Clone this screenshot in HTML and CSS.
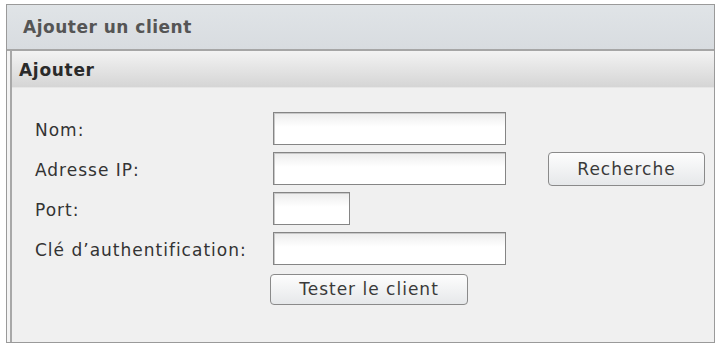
FILE: index.html
```html
<!DOCTYPE html>
<html lang="fr">
<head>
<meta charset="utf-8">
<title>Ajouter un client</title>
<link rel="stylesheet" href="styles.css">
</head>
<body>
<div class="window">
  <div class="title">Ajouter un client</div>
  <div class="panel">
    <div class="panel-head">Ajouter</div>
    <div class="panel-body">
      <div class="form">
        <label class="lbl">Nom:</label>
        <input class="field" type="text">
        <span></span>

        <label class="lbl">Adresse IP:</label>
        <input class="field" type="text">
        <button class="btn btn-search">Recherche</button>

        <label class="lbl">Port:</label>
        <input class="field field-port" type="text">
        <span></span>

        <label class="lbl">Clé d’authentification:</label>
        <input class="field" type="text">
        <span></span>

        <span></span>
        <button class="btn btn-test">Tester le client</button>
        <span></span>
      </div>
    </div>
  </div>
</div>
</body>
</html>
```
FILE: styles.css
```css
html, body {
  margin: 0;
  padding: 0;
  background: #ffffff;
}
body {
  font-family: "DejaVu Sans", Verdana, sans-serif;
  color: #333;
}
.window {
  margin: 4px 2px 0 6px;
  height: 339px;
  box-sizing: border-box;
  border: 1px solid #9a9a9a;
  background: #f4f4f4;
  display: flex;
  flex-direction: column;
}
.title {
  height: 46px;
  box-sizing: border-box;
  background: linear-gradient(#e0e4e7, #d8dce0);
  border-bottom: 2px solid #a6a6a6;
  padding-left: 16px;
  line-height: 44px;
  font-weight: bold;
  font-size: 17px;
  letter-spacing: 0.5px;
  color: #555555;
}
.panel {
  flex: 1;
  margin-left: 3px;
  border-left: 2px solid #a8a8a8;
  display: flex;
  flex-direction: column;
}
.panel-head {
  height: 37px;
  box-sizing: border-box;
  background: linear-gradient(#f3f3f3, #d5d5d5);
  border-bottom: 1px solid #e6e6e6;
  padding-left: 7px;
  line-height: 38px;
  font-weight: bold;
  font-size: 17px;
  letter-spacing: 0.7px;
  color: #2a2a2a;
}
.panel-body {
  flex: 1;
  background: #f0f0f0;
  padding: 24px 0 0 23px;
}
.form {
  display: grid;
  grid-template-columns: 238px 233px 199px;
  grid-auto-rows: 33px;
  row-gap: 7px;
  align-items: center;
}
.lbl {
  font-size: 17px;
  letter-spacing: 1px;
  color: #333;
  padding-top: 3px;
}
.field {
  width: 233px;
  height: 33px;
  box-sizing: border-box;
  border: 1px solid #858585;
  box-shadow: inset 1px 1px 0 #c8c8c8;
  background: linear-gradient(#ececec, #ffffff 45%);
  margin: 0;
  padding: 0 4px;
}
.field-port {
  width: 77px;
}
.btn {
  font-family: "DejaVu Sans", Verdana, sans-serif;
  font-size: 17px;
  letter-spacing: 1px;
  color: #3a3a3a;
  border: 1px solid #8a8a8a;
  border-radius: 4px;
  background: linear-gradient(#fdfdfd, #e6e8ea);
  margin: 0;
  padding: 0;
  box-sizing: border-box;
}
.btn-search {
  width: 157px;
  height: 34px;
  margin-left: 42px;
}
.btn-test {
  width: 198px;
  height: 31px;
  margin-left: -3px;
  margin-top: 1px;
}
```
